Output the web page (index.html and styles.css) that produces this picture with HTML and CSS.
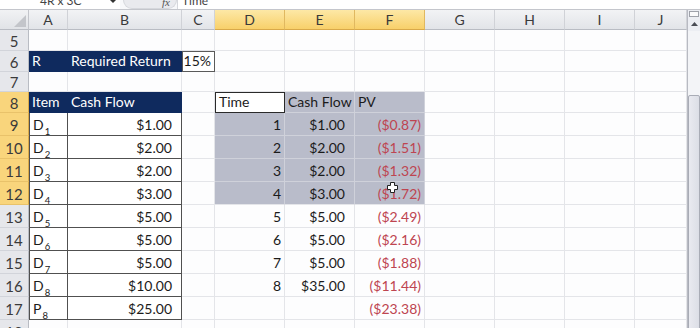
FILE: index.html
```html
<!DOCTYPE html>
<html>
<head>
<meta charset="utf-8">
<link rel="stylesheet" href="styles.css">
</head>
<body>
<div class="app">
  <div class="formula">
    <div class="namebox"><span class="fb-text">4R x 3C</span><span class="nb-arrow"></span></div>
    <div class="fb-grip"><span class="fx">fx</span></div>
    <div class="fb-content"><span class="fb-text">Time</span></div>
  </div>
  <div class="main">
    <div class="sheet">
      <!-- header row -->
      <div class="corner"><svg width="29" height="20" viewBox="0 0 29 20"><polygon points="26,5 26,17 14,17" fill="#c3c5ca"/></svg></div>
      <div class="ch">A</div><div class="ch">B</div><div class="ch">C</div>
      <div class="ch ch-sel">D</div><div class="ch ch-sel">E</div><div class="ch ch-sel">F</div>
      <div class="ch">G</div><div class="ch">H</div><div class="ch">I</div><div class="ch">J</div>

      <!-- row 5 -->
      <div class="rh">5</div>
      <div class="c"></div><div class="c"></div><div class="c"></div><div class="c"></div><div class="c"></div><div class="c"></div><div class="c"></div><div class="c"></div><div class="c"></div><div class="c"></div>

      <!-- row 6 -->
      <div class="rh">6</div>
      <div class="c navy">R</div><div class="c navy">Required Return</div><div class="c boxed r">15%</div>
      <div class="c"></div><div class="c"></div><div class="c"></div><div class="c"></div><div class="c"></div><div class="c"></div><div class="c"></div>

      <!-- row 7 -->
      <div class="rh">7</div>
      <div class="c"></div><div class="c"></div><div class="c"></div><div class="c"></div><div class="c"></div><div class="c"></div><div class="c"></div><div class="c"></div><div class="c"></div><div class="c"></div>

      <!-- row 8 -->
      <div class="rh rh-sel">8</div>
      <div class="c navy">Item</div><div class="c navy">Cash Flow</div><div class="c"></div>
      <div class="c active">Time</div><div class="c sel">Cash Flow</div><div class="c sel">PV</div>
      <div class="c"></div><div class="c"></div><div class="c"></div><div class="c"></div>

      <!-- row 9 -->
      <div class="rh rh-sel">9</div>
      <div class="c bx bxl">D<sub>1</sub></div><div class="c bx cur">$1.00</div><div class="c"></div>
      <div class="c sel r">1</div><div class="c sel cur">$1.00</div><div class="c sel r neg">($0.87)</div>
      <div class="c"></div><div class="c"></div><div class="c"></div><div class="c"></div>

      <!-- row 10 -->
      <div class="rh rh-sel">10</div>
      <div class="c bx bxl">D<sub>2</sub></div><div class="c bx cur">$2.00</div><div class="c"></div>
      <div class="c sel r">2</div><div class="c sel cur">$2.00</div><div class="c sel r neg">($1.51)</div>
      <div class="c"></div><div class="c"></div><div class="c"></div><div class="c"></div>

      <!-- row 11 -->
      <div class="rh rh-sel">11</div>
      <div class="c bx bxl">D<sub>3</sub></div><div class="c bx cur">$2.00</div><div class="c"></div>
      <div class="c sel r">3</div><div class="c sel cur">$2.00</div><div class="c sel r neg">($1.32)</div>
      <div class="c"></div><div class="c"></div><div class="c"></div><div class="c"></div>

      <!-- row 12 -->
      <div class="rh rh-sel">12</div>
      <div class="c bx bxl">D<sub>4</sub></div><div class="c bx cur">$3.00</div><div class="c"></div>
      <div class="c sel sel-last r">4</div><div class="c sel sel-last cur">$3.00</div><div class="c sel sel-last r neg">($1.72)</div>
      <div class="c"></div><div class="c"></div><div class="c"></div><div class="c"></div>

      <!-- row 13 -->
      <div class="rh">13</div>
      <div class="c bx bxl">D<sub>5</sub></div><div class="c bx cur">$5.00</div><div class="c"></div>
      <div class="c r">5</div><div class="c cur">$5.00</div><div class="c r neg">($2.49)</div>
      <div class="c"></div><div class="c"></div><div class="c"></div><div class="c"></div>

      <!-- row 14 -->
      <div class="rh">14</div>
      <div class="c bx bxl">D<sub>6</sub></div><div class="c bx cur">$5.00</div><div class="c"></div>
      <div class="c r">6</div><div class="c cur">$5.00</div><div class="c r neg">($2.16)</div>
      <div class="c"></div><div class="c"></div><div class="c"></div><div class="c"></div>

      <!-- row 15 -->
      <div class="rh">15</div>
      <div class="c bx bxl">D<sub>7</sub></div><div class="c bx cur">$5.00</div><div class="c"></div>
      <div class="c r">7</div><div class="c cur">$5.00</div><div class="c r neg">($1.88)</div>
      <div class="c"></div><div class="c"></div><div class="c"></div><div class="c"></div>

      <!-- row 16 -->
      <div class="rh">16</div>
      <div class="c bx bxl">D<sub>8</sub></div><div class="c bx cur">$10.00</div><div class="c"></div>
      <div class="c r">8</div><div class="c cur">$35.00</div><div class="c r neg">($11.44)</div>
      <div class="c"></div><div class="c"></div><div class="c"></div><div class="c"></div>

      <!-- row 17 -->
      <div class="rh">17</div>
      <div class="c bx bxl">P<sub>8</sub></div><div class="c bx cur">$25.00</div><div class="c"></div>
      <div class="c"></div><div class="c"></div><div class="c r neg">($23.38)</div>
      <div class="c"></div><div class="c"></div><div class="c"></div><div class="c"></div>

      <!-- row 18 -->
      <div class="rh">18</div>
      <div class="c"></div><div class="c"></div><div class="c"></div><div class="c"></div><div class="c"></div><div class="c"></div><div class="c"></div><div class="c"></div><div class="c"></div><div class="c"></div>
    </div>
    <div class="vscroll">
      <div class="vs-split"></div>
      <div class="vs-up"><svg width="7" height="4" viewBox="0 0 7 4"><polygon points="0,4 3.5,0 7,4" fill="#4a4d55"/></svg></div>
      <div class="vs-track"></div>
      <div class="vs-thumb"></div>
    </div>
  </div>
  <svg class="cursor" width="11" height="11" viewBox="0 0 11 11"><path d="M3.5 0.5h4v3h3v4h-3v3h-4v-3h-3v-4h3z" fill="#ffffff" stroke="#222" stroke-width="1"/></svg>
</div>
</body>
</html>
```

FILE: styles.css
```css
html, body {
  margin: 0;
  padding: 0;
  background: #fdfdfe;
}
.app {
  position: relative;
  width: 700px;
  height: 328px;
  overflow: hidden;
  font-family: Lato, "Open Sans", sans-serif;
  color: #1b1b1b;
}
.formula {
  height: 9px;
  display: flex;
  border-bottom: 1px solid #c4c6cc;
  background: #f7f8fa;
  overflow: hidden;
  font-size: 12px;
  color: #444;
}
.fb-text {
  display: block;
  flex-shrink: 0;
  line-height: 14px;
  margin-top: -6px;
  white-space: nowrap;
}
.namebox {
  width: 120px;
  display: flex;
  padding: 0 4px 0 40px;
  box-sizing: border-box;
  justify-content: space-between;
  background: #fff;
}
.nb-arrow {
  width: 0;
  height: 0;
  border-left: 3px solid transparent;
  border-right: 3px solid transparent;
  border-top: 3px solid #333;
}
.fb-grip {
  width: 54px;
  margin-left: 3px;
  background: #e9eaee;
  border: 1px solid #d5d7dc;
  border-top: none;
  border-radius: 0 0 10px 10px;
  display: flex;
  justify-content: flex-end;
  padding-right: 6px;
  box-sizing: border-box;
}
.fx {
  font-style: italic;
  font-family: "Liberation Serif", serif;
  font-size: 11px;
  line-height: 10px;
  margin-top: -3px;
  color: #555;
}
.fb-content {
  flex: 1;
  padding-left: 4px;
  background: #fff;
  border-left: 1px solid #d5d7dc;
}
.main {
  display: flex;
}
.sheet {
  display: grid;
  grid-template-columns: 29px 39px 114px 33px repeat(6, 70px) 52px;
  grid-template-rows: 20px 21px 21px 20px 21px repeat(10, 23px);
  width: 687px;
  font-size: 14px;
}
.corner {
  background: linear-gradient(#f1f2f4, #e1e3e7);
  border-right: 1px solid #c3c5cb;
  border-bottom: 1px solid #b9bcc3;
}
.ch {
  display: flex;
  align-items: center;
  justify-content: center;
  background: linear-gradient(#f2f3f5, #e2e4e8);
  border-right: 1px solid #d0d2d7;
  border-bottom: 1px solid #b9bcc3;
  color: #3a3a3a;
  font-size: 14px;
  box-sizing: border-box;
}
.ch-sel {
  background: linear-gradient(#fde8a6, #f8d06a);
  border-right-color: #e0b860;
  border-bottom-color: #d9a949;
}
.rh {
  display: flex;
  align-items: center;
  justify-content: center;
  background: #e6e7eb;
  border-right: 1px solid #b9bcc3;
  border-bottom: 1px solid #d2d4da;
  color: #3a3a3a;
  font-size: 15px;
  box-sizing: border-box;
  padding-top: 1px;
}
.rh-sel {
  background: #f9d57c;
  border-right-color: #d9a949;
  border-bottom-color: #e9c26a;
}
.c {
  box-sizing: border-box;
  border-right: 1px solid #e4e5e9;
  border-bottom: 1px solid #e4e5e9;
  display: flex;
  align-items: flex-end;
  padding: 0 2px 3px 3px;
  line-height: 15px;
  white-space: nowrap;
}
.r { justify-content: flex-end; padding-right: 3px; }
.cur { justify-content: flex-end; padding-right: 9px; }
.navy {
  background: #0f2a5e;
  color: #ffffff;
  border-color: #0f2a5e;
}
.boxed {
  border: 1px solid #5a5a5a;
  background: #fff;
}
.active {
  border: 1px solid #2a2a2a;
  background: #fff;
}
.sel {
  background: #b9bcca;
  border-right-color: #cfd1da;
  border-bottom-color: #cfd1da;
}
.sel-last { border-bottom-color: #e4e5e9; }
.bx {
  border-right-color: #505050;
  border-bottom-color: #505050;
  background: #fff;
}
.bxl { border-left: 1px solid #505050; }
.neg { color: #be4551; }
sub {
  font-size: 9.5px;
  line-height: 0;
  vertical-align: -2px;
  margin-left: 1px;
}
.vscroll {
  position: relative;
  width: 13px;
  display: flex;
  flex-direction: column;
  border-left: 1px solid #b8bac2;
  box-sizing: border-box;
  background: #eceef3;
}
.vs-split {
  height: 4px;
  margin: 1px 1px 0;
  border: 1px solid #9fa2aa;
  background: #fafafb;
}
.vs-up {
  height: 14px;
  display: flex;
  align-items: center;
  justify-content: center;
}
.vs-track {
  height: 64px;
  background: #f3f4f7;
}
.vs-thumb {
  flex: 1;
  border: 1px solid #a9acb6;
  border-radius: 2px;
  background: linear-gradient(90deg, #e9eaf0, #dcdee6);
}
.cursor {
  position: absolute;
  left: 387px;
  top: 182px;
}
```
